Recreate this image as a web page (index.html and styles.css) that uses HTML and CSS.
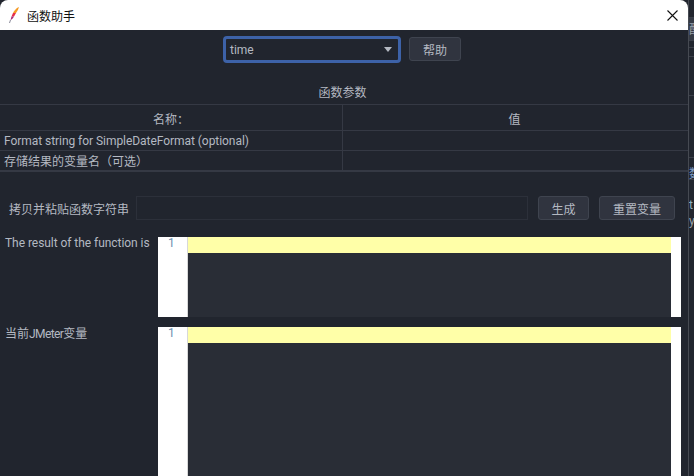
FILE: index.html
```html
<!DOCTYPE html>
<html>
    <head>
        <meta charset="utf-8">
        <title>函数助手</title>
        <link rel="stylesheet" href="styles.css">
    </head>
    <body>
        <div class="dialog">
            <header class="titlebar">
                <svg class="feather" width="12" height="18" viewBox="0 0 12 18">
                    <path d="M11 1 C 8 2 6 5 5 7 L 8 7 C 9.500 5 10.500 3 11 1 Z" fill="#f59a23"/>
                    <path d="M5 7 L 8 7 L 6 10.500 L 3.500 10.500 Z" fill="#e8304a"/>
                    <path d="M3.500 10.500 L 6 10.500 C 5 12.500 4 13.500 2.500 14 Z" fill="#a52a7a"/>
                    <path d="M2.500 14 L 1.500 17" stroke="#8a8a9a" stroke-width="1" fill="none"/>
                </svg>
                <span class="title">函数助手</span>
                <svg class="close" width="11" height="11" viewBox="0 0 11 11">
                    <path d="M0.500 0.500 L 10.500 10.500 M10.500 0.500 L 0.500 10.500" stroke="#111" stroke-width="1.100"/>
                </svg>
            </header>

            <div class="picker">
                <div class="combo">
                    <span class="combo-value">time</span>
                    <i class="arrow"></i>
                </div>
                <button class="btn btn-help">帮助</button>
            </div>

            <div class="caption">函数参数</div>

            <div class="params">
                <div class="cell head">名称：</div>
                <div class="cell head">值</div>
                <div class="cell latin">Format string for SimpleDateFormat (optional)</div>
                <div class="cell"></div>
                <div class="cell cjk">存储结果的变量名（可选）</div>
                <div class="cell"></div>
            </div>

            <div class="generate">
                <label>拷贝并粘贴函数字符串</label>
                <div class="field"></div>
                <button class="btn btn-gen">生成</button>
                <button class="btn btn-reset">重置变量</button>
            </div>

            <div class="output">
                <label class="latin">The result of the function is</label>
                <div class="editor">
                    <div class="gutter">1</div>
                    <div class="code"><div class="current"></div></div>
                </div>
            </div>

            <div class="output output-vars">
                <label>当前<span class="tight">JMeter</span>变量</label>
                <div class="editor">
                    <div class="gutter">1</div>
                    <div class="code"><div class="current"></div></div>
                </div>
            </div>
        </div>

        <aside class="behind">
            <div class="sliver s1"></div>
            <div class="sliver s2">配</div>
            <div class="sliver s3"></div>
            <div class="sliver s4"></div>
            <div class="sliver s5"></div>
            <div class="sliver s6"></div>
            <div class="sliver s7">数</div>
            <div class="sliver s8">t</div>
            <div class="sliver s9">y</div>
        </aside>
    </body>
</html>
```

FILE: styles.css
```css
html, body {
    margin: 0;
    height: 100%;
    overflow: hidden;
}

body {
    display: flex;
    width: 694px;
    height: 476px;
    background: #21252e;
    font-family: "Roboto", "Noto Sans CJK SC", sans-serif;
    font-size: 12px;
    color: #b4b9c2;
}

.dialog {
    width: 688px;
    flex: none;
    height: 476px;
    overflow: hidden;
    background: #21252e;
}

.titlebar {
    height: 30px;
    display: flex;
    align-items: center;
    padding: 0 10px 0 8px;
    box-sizing: border-box;
    background: #fff;
    border-radius: 8px 8px 0 0;
    color: #111;
}

.title {
    margin-left: 7px;
}

.close {
    margin-left: auto;
}

.picker {
    height: 35px;
    display: flex;
    align-items: center;
    padding: 3px 0 0 223px;
    box-sizing: border-box;
    gap: 8px;
}

.combo {
    width: 178px;
    height: 27px;
    box-sizing: border-box;
    display: flex;
    align-items: center;
    justify-content: space-between;
    padding: 0 6px 0 4px;
    border: 3px solid #3d62a8;
    border-radius: 4px;
    background: #21252e;
}

.combo-value {
    padding-top: 2px;
}

.arrow {
    width: 0;
    height: 0;
    border-left: 4px solid transparent;
    border-right: 4px solid transparent;
    border-top: 5px solid #b4b9c2;
}

.btn {
    height: 24px;
    padding: 0;
    border: 1px solid #3f444f;
    border-radius: 3px;
    background: #30343f;
    color: #b4b9c2;
    font: inherit;
}

.btn-help {
    width: 52px;
}

.btn-gen {
    width: 51px;
}

.btn-reset {
    width: 76px;
    margin-left: 10px;
}

.caption {
    height: 39px;
    padding-top: 19px;
    line-height: 18px;
    box-sizing: border-box;
    text-align: center;
    margin-right: 3px;
}

.params {
    display: grid;
    grid-template-columns: 343px 1fr;
    grid-template-rows: 26px 20px 19px;
    border-top: 1px solid #353944;
    border-bottom: 2px solid #353944;
}

.cell {
    padding-left: 4px;
    line-height: 21px;
    border-bottom: 1px solid #353944;
    white-space: nowrap;
}

.cell:nth-child(odd) {
    border-right: 1px solid #353944;
}

.cell:nth-last-child(-n+2) {
    border-bottom: 0;
}

.cjk {
    line-height: 22px;
}

.latin {
    letter-spacing: -0.05px;
}

.tight {
    letter-spacing: -0.6px;
}

.head {
    padding-left: 0;
    text-align: center;
    line-height: 30px;
}

.head:nth-child(2) {
    padding-right: 2px;
}

.generate {
    display: flex;
    align-items: center;
    height: 24px;
    margin-top: 24px;
    padding-left: 9px;
}

.generate label {
    width: 127px;
    flex: none;
}

.field {
    width: 392px;
    height: 24px;
    box-sizing: border-box;
    border: 1px solid #2c303a;
    margin-right: 10px;
}

.output {
    display: flex;
    height: 80px;
    margin-top: 17px;
    padding-left: 5px;
}

.output label {
    width: 153px;
    flex: none;
    line-height: 13px;
    white-space: nowrap;
}

.output-vars {
    margin-top: 10px;
    height: 160px;
}

.output-vars label {
    line-height: 15px;
}

.editor {
    display: flex;
    width: 523px;
    padding-right: 10px;
    box-sizing: border-box;
    background: #fff;
}

.gutter {
    width: 30px;
    flex: none;
    box-sizing: border-box;
    padding-left: 10px;
    border-right: 1px solid #d8d8d8;
    color: #6e8fb0;
    line-height: 13px;
}

.code {
    flex: 1;
    background: #292d36;
}

.current {
    height: 16px;
    background: #ffffa8;
}

.behind {
    flex: none;
    width: 6px;
    overflow: hidden;
    border-left: 1px solid #464a52;
    box-sizing: border-box;
    color: #9aa0aa;
}

.sliver {
    box-sizing: border-box;
    border-bottom: 1px solid #3a3e48;
}

.s1 {
    height: 18px;
}

.s2 {
    height: 23px;
    line-height: 24px;
    background: #353a45;
}

.s3 {
    height: 7px;
}

.s4 {
    height: 9px;
}

.s5 {
    height: 39px;
}

.s6 {
    height: 62px;
}

.s7 {
    height: 22px;
    line-height: 32px;
    color: #7f9cc4;
}

.s8 {
    height: 33px;
    line-height: 50px;
    border-bottom: 0;
    color: #8fb0c0;
}

.s9 {
    height: 16px;
    line-height: 16px;
    border-bottom: 0;
}
```
